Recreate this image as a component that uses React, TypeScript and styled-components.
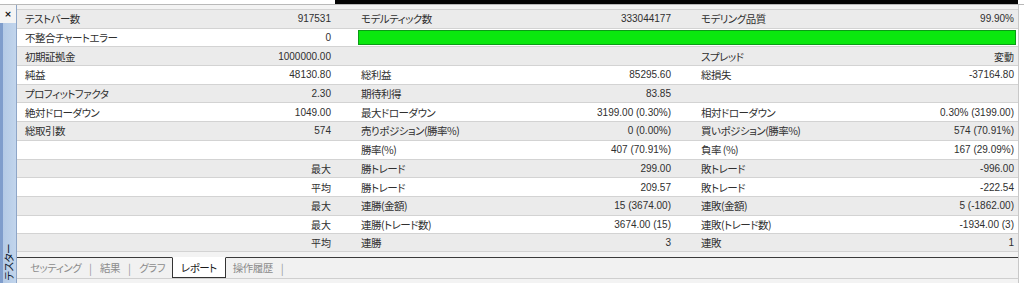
import React from "react"
import styled, {createGlobalStyle} from "styled-components"

const GlobalStyle = createGlobalStyle`
    html, body {
        margin: 0;
        padding: 0;
        background: #ffffff;
    }
    body {
        font-family: "Noto Sans CJK JP", sans-serif;
        color: #2f2f2f;
    }
`

const Frame = styled.div`
    width: 1024px;
    height: 283px;
    overflow: hidden;
    display: flex;
    flex-direction: column;
    background: #ffffff;
`

const TopStrip = styled.div`
    height: 4px;
    display: flex;
    border-bottom: 1px solid #b9b9b9;
`

const TopGap = styled.div`
    width: 335px;
    background: #ffffff;
`

const TopDark = styled.div`
    width: 683px;
    background: #050505;
`

const Body = styled.div`
    flex: 1;
    display: flex;
    min-height: 0;
`

const SideBar = styled.div`
    width: 17px;
    display: flex;
    flex-direction: column;
    justify-content: space-between;
    align-items: center;
    background: linear-gradient(to right, #7f9dcc 0, #7f9dcc 3px, #b4cae6 3px, #c2d5ec 100%);
    border-right: 1px solid #8ea6c8;
    box-sizing: border-box;
`

const CloseMark = styled.div`
    width: 100%;
    height: 18px;
    display: flex;
    align-items: center;
    justify-content: center;
    background: #f4f4f4;
    font-family: "DejaVu Sans", sans-serif;
    font-weight: bold;
    font-size: 9px;
    color: #111;
`

const SideTitle = styled.div`
    writing-mode: vertical-rl;
    text-orientation: sideways;
    transform: rotate(180deg);
    font-size: 10.5px;
    line-height: 13px;
    letter-spacing: -0.5px;
    color: #0f1a30;
    margin-bottom: 3px;
    font-feature-settings: "palt";
`

const Main = styled.div`
    width: 1001px;
    display: flex;
    flex-direction: column;
    background: #f3f3f3;
    padding-top: 4px;
`

const Table = styled.div`
    display: flex;
    flex-direction: column;
`

const Row = styled.div<{$alt: boolean}>`
    display: grid;
    grid-template-columns: 170px 150px 190px 150px 190px 151px;
    height: 18.7px;
    box-sizing: border-box;
    border-top: 1px solid #d3d3d3;
    background: ${p => (p.$alt ? "#ebebeb" : "#ffffff")};
    &:last-child {
        border-bottom: 1px solid #d3d3d3;
    }
`

const Label = styled.div<{$first?: boolean}>`
    display: flex;
    align-items: center;
    padding-left: ${p => (p.$first ? "8px" : "24px")};
    font-size: 10.5px;
    letter-spacing: -0.5px;
    white-space: nowrap;
    font-feature-settings: "palt";
`

const Value = styled.div<{$last?: boolean}>`
    display: flex;
    align-items: center;
    justify-content: flex-end;
    padding-right: ${p => (p.$last ? "4px" : "6px")};
    font-family: "Liberation Sans", "Noto Sans CJK JP", sans-serif;
    font-size: 10px;
    white-space: nowrap;
`

const QualityBar = styled.div`
    grid-column: 3 / 7;
    margin: 1px 2px 1px 21px;
    background: #0ae80e;
    border: 1px solid #0b9a16;
`

const TabArea = styled.div`
    margin-top: 5px;
    border-top: 1px solid #3a3a3a;
    height: 20px;
    display: flex;
    align-items: stretch;
    padding-left: 6px;
    background: #f1f1f1;
    border-bottom: 1px solid #cfcfcf;
`

const Tab = styled.div<{$active?: boolean}>`
    display: flex;
    align-items: center;
    padding: 0 ${p => (p.$active ? "8px" : "6px")};
    margin-top: -1px;
    font-size: 10.5px;
    letter-spacing: -0.5px;
    font-feature-settings: "palt";
    color: ${p => (p.$active ? "#1a1a1a" : "#8c8c8c")};
    background: ${p => (p.$active ? "#ffffff" : "transparent")};
    border: ${p => (p.$active ? "1px solid #333" : "1px solid transparent")};
    border-top: ${p => (p.$active ? "1px solid #ffffff" : "1px solid transparent")};
`

const TabSep = styled.span`
    display: flex;
    align-items: center;
    padding: 0 1px;
    color: #9a9a9a;
    font-size: 11px;
`

const RightEdge = styled.div`
    flex: 1;
    border-left: 1px solid #c8c8c8;
    background: #ffffff;
`

type Cell = [string, string]

const rows: {cells: Cell[]; bar?: boolean}[] = [
    {cells: [["テストバー数", "917531"], ["モデルティック数", "333044177"], ["モデリング品質", "99.90%"]]},
    {cells: [["不整合チャートエラー", "0"]], bar: true},
    {cells: [["初期証拠金", "1000000.00"], ["", ""], ["スプレッド", "変動"]]},
    {cells: [["純益", "48130.80"], ["総利益", "85295.60"], ["総損失", "-37164.80"]]},
    {cells: [["プロフィットファクタ", "2.30"], ["期待利得", "83.85"], ["", ""]]},
    {cells: [["絶対ドローダウン", "1049.00"], ["最大ドローダウン", "3199.00 (0.30%)"], ["相対ドローダウン", "0.30% (3199.00)"]]},
    {cells: [["総取引数", "574"], ["売りポジション(勝率%)", "0 (0.00%)"], ["買いポジション(勝率%)", "574 (70.91%)"]]},
    {cells: [["", ""], ["勝率(%)", "407 (70.91%)"], ["負率 (%)", "167 (29.09%)"]]},
    {cells: [["", "最大"], ["勝トレード", "299.00"], ["敗トレード", "-996.00"]]},
    {cells: [["", "平均"], ["勝トレード", "209.57"], ["敗トレード", "-222.54"]]},
    {cells: [["", "最大"], ["連勝(金額)", "15 (3674.00)"], ["連敗(金額)", "5 (-1862.00)"]]},
    {cells: [["", "最大"], ["連勝(トレード数)", "3674.00 (15)"], ["連敗(トレード数)", "-1934.00 (3)"]]},
    {cells: [["", "平均"], ["連勝", "3"], ["連敗", "1"]]},
]

const tabs = ["セッティング", "結果", "グラフ", "レポート", "操作履歴"]

export default function App() {
    return (
        <Frame>
            <GlobalStyle />
            <TopStrip>
                <TopGap />
                <TopDark />
            </TopStrip>
            <Body>
                <SideBar>
                    <CloseMark>×</CloseMark>
                    <SideTitle>テスター</SideTitle>
                </SideBar>
                <Main>
                    <Table>
                        {rows.map((row, i) => (
                            <Row key={i} $alt={i % 2 === 0}>
                                {row.cells.map(([label, value], j) => (
                                    <React.Fragment key={j}>
                                        <Label $first={j === 0}>{label}</Label>
                                        <Value $last={j === 2}>{value}</Value>
                                    </React.Fragment>
                                ))}
                                {row.bar && <QualityBar />}
                            </Row>
                        ))}
                    </Table>
                    <TabArea>
                        {tabs.map((t, i) => {
                            const active = t === "レポート"
                            const nextActive = tabs[i + 1] === "レポート"
                            return (
                                <React.Fragment key={t}>
                                    <Tab $active={active}>{t}</Tab>
                                    {!active && !nextActive && <TabSep>|</TabSep>}
                                </React.Fragment>
                            )
                        })}
                    </TabArea>
                </Main>
                <RightEdge />
            </Body>
        </Frame>
    )
}
